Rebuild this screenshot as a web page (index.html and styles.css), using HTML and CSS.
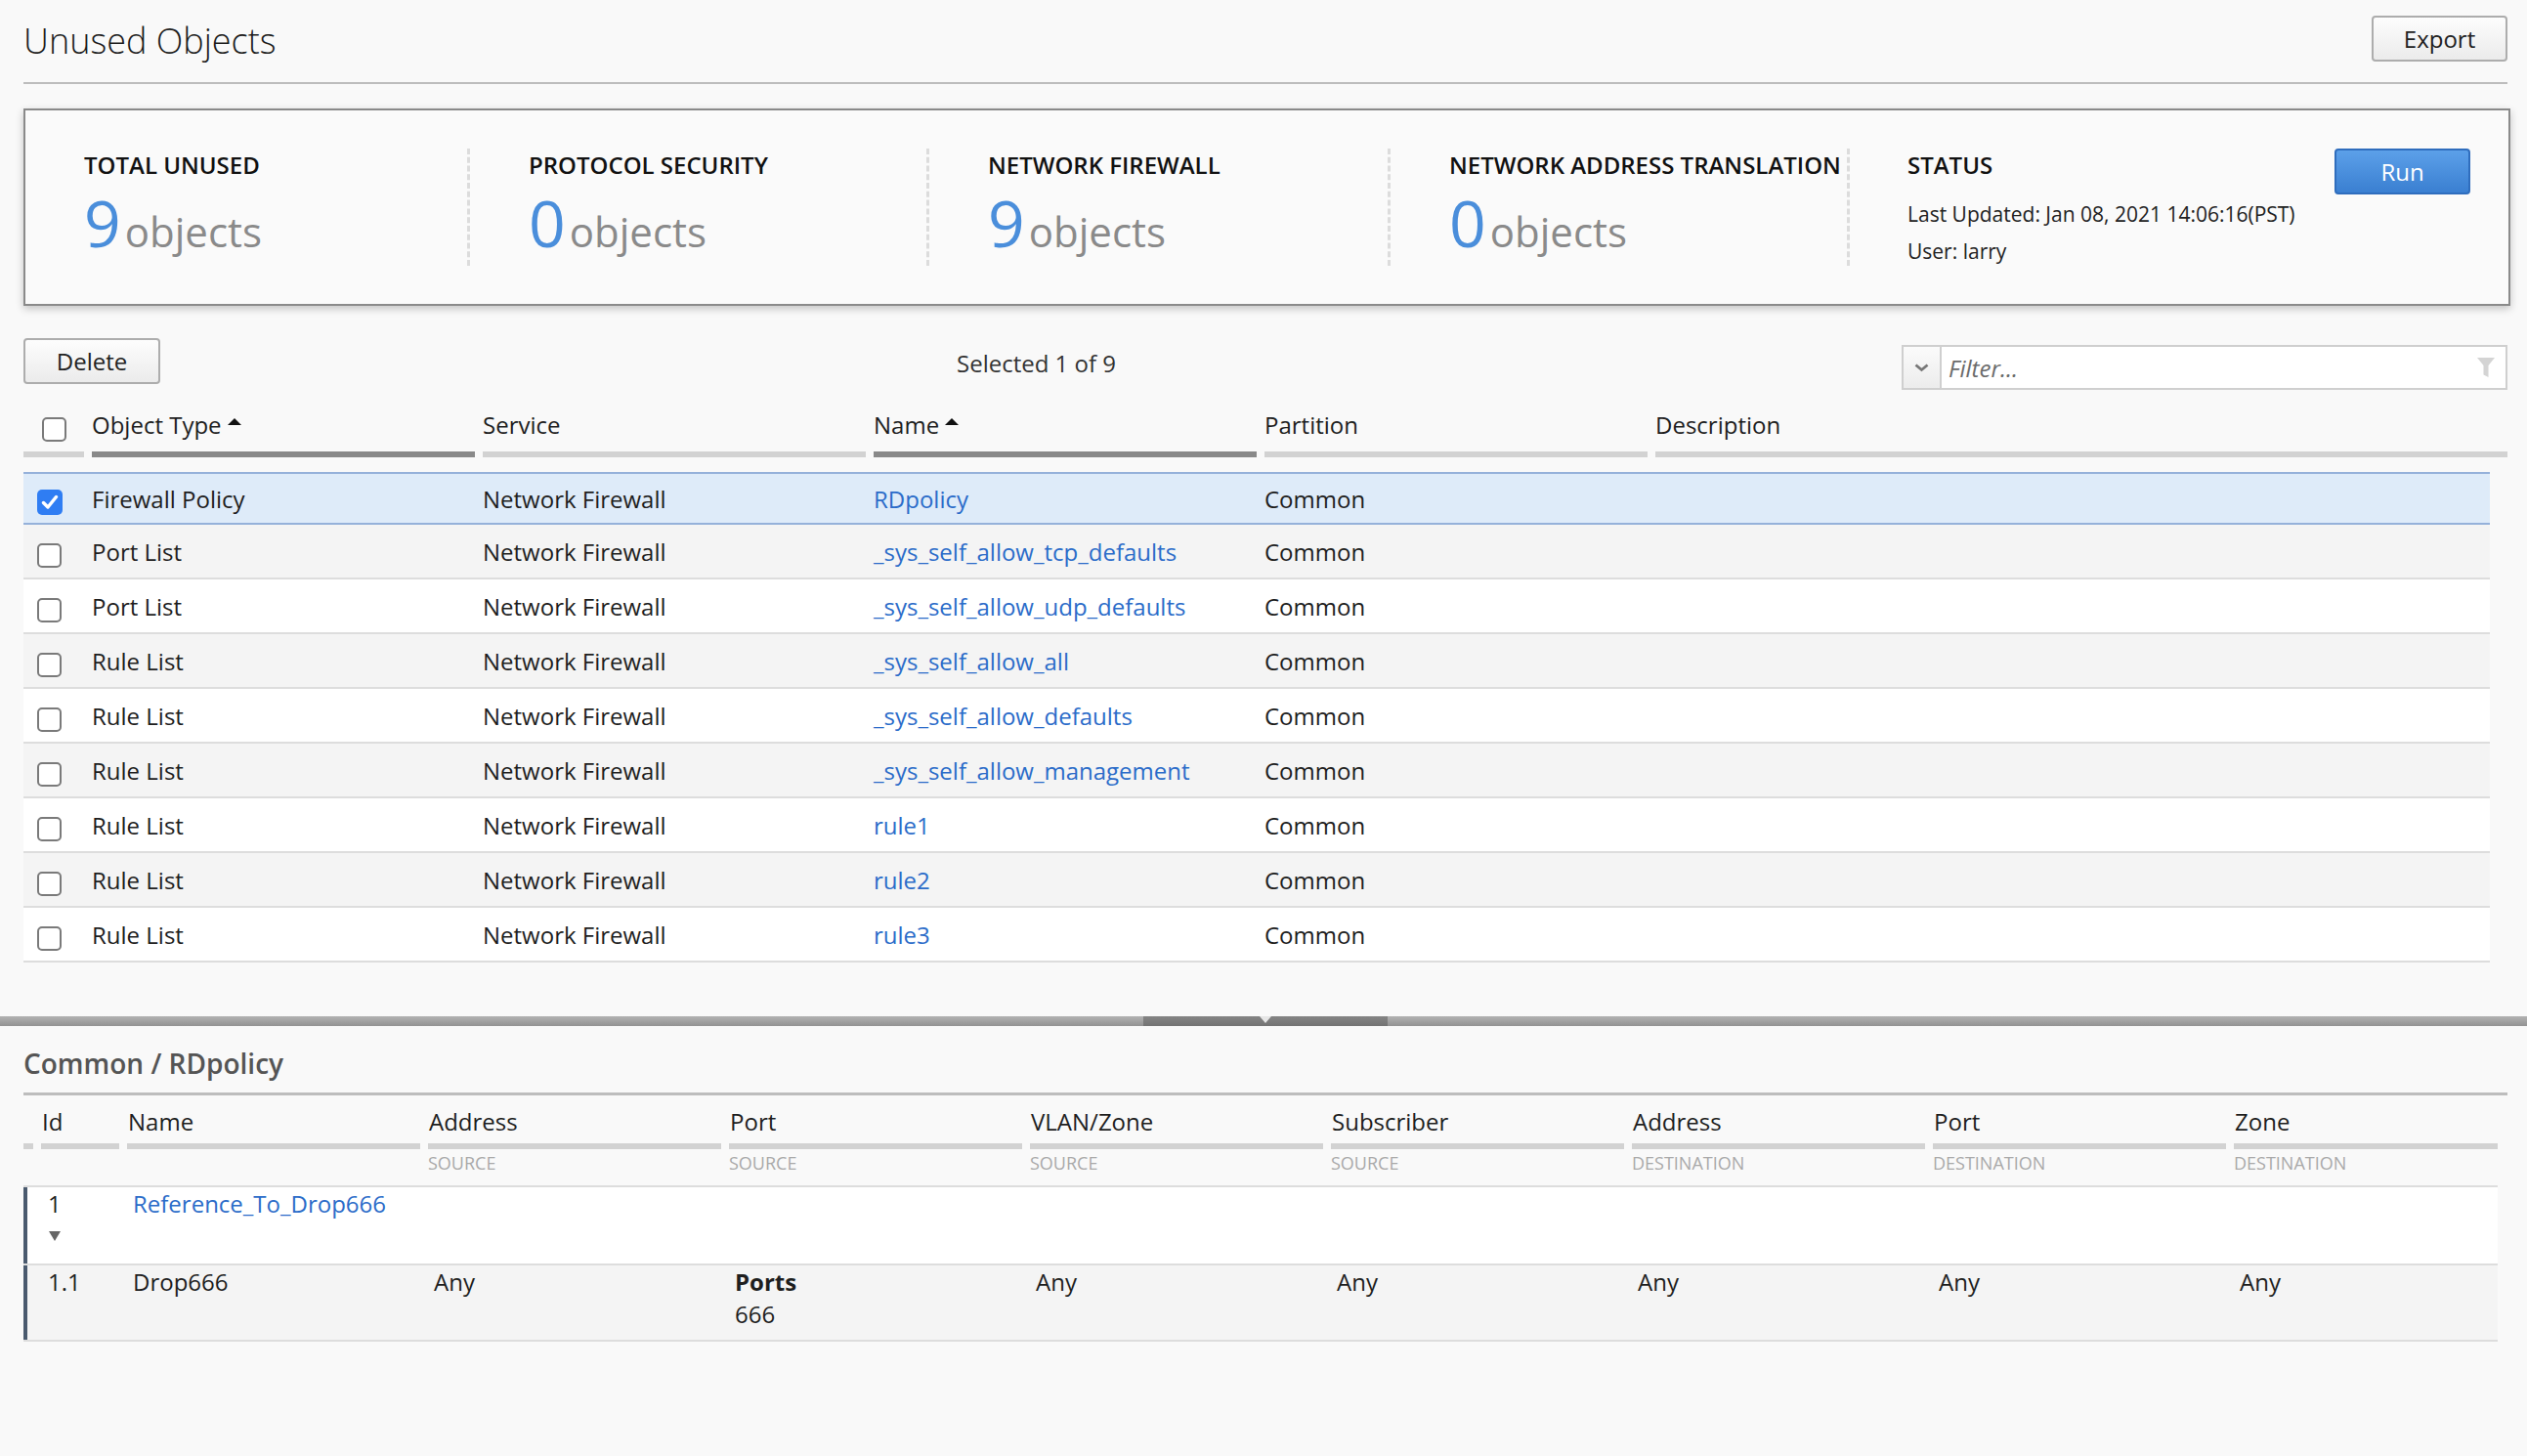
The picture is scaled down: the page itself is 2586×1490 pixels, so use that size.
FILE: index.html
```html
<!DOCTYPE html>
<html lang="en">
<head>
<meta charset="utf-8">
<title>Unused Objects</title>
<link rel="stylesheet" href="styles.css">
</head>
<body>
<div class="main">
  <header class="page-header">
    <h1 class="page-title">Unused Objects</h1>
    <button class="btn btn-export">Export</button>
  </header>

  <section class="summary">
    <div class="stat">
      <div class="stat-label">TOTAL UNUSED</div>
      <div class="stat-value"><span class="num">9</span><span class="unit">objects</span></div>
    </div>
    <div class="stat">
      <div class="stat-label">PROTOCOL SECURITY</div>
      <div class="stat-value"><span class="num">0</span><span class="unit">objects</span></div>
    </div>
    <div class="stat">
      <div class="stat-label">NETWORK FIREWALL</div>
      <div class="stat-value"><span class="num">9</span><span class="unit">objects</span></div>
    </div>
    <div class="stat">
      <div class="stat-label">NETWORK ADDRESS TRANSLATION</div>
      <div class="stat-value"><span class="num">0</span><span class="unit">objects</span></div>
    </div>
    <div class="stat stat-status">
      <div class="status-info">
        <div class="stat-label">STATUS</div>
        <div class="status-line status-first">Last Updated: Jan 08, 2021 14:06:16(PST)</div>
        <div class="status-line">User: larry</div>
      </div>
      <button class="btn btn-primary">Run</button>
    </div>
  </section>

  <div class="toolbar">
    <button class="btn btn-delete">Delete</button>
    <span class="selection">Selected 1 of 9</span>
    <div class="filter">
      <div class="filter-drop">
        <svg width="15" height="9" viewBox="0 0 15 9"><path d="M1.5 1.5 L7.5 6.5 L13.5 1.5" fill="none" stroke="#777" stroke-width="2.8"/></svg>
      </div>
      <div class="filter-text">Filter...</div>
      <svg class="funnel" width="20" height="22" viewBox="0 0 20 22"><path d="M1 1 H19 L12.5 9 V21 L7.5 18.5 V9 Z" fill="#d4d4d4"/></svg>
    </div>
  </div>

  <div class="grid grid-head">
    <div class="th th-check"><span class="cb"></span></div>
    <div class="th sorted">Object Type<span class="sort-up"></span></div>
    <div class="th">Service</div>
    <div class="th sorted">Name<span class="sort-up"></span></div>
    <div class="th">Partition</div>
    <div class="th">Description</div>
  </div>

  <div class="grid-body">
    <div class="grid row selected">
      <div class="td td-check"><span class="cb checked"><svg width="26" height="26" viewBox="0 0 26 26"><path d="M6.5 13.5 L11 18 L19.5 7.5" fill="none" stroke="#fff" stroke-width="3.4" stroke-linecap="round" stroke-linejoin="round"/></svg></span></div>
      <div class="td">Firewall Policy</div>
      <div class="td">Network Firewall</div>
      <div class="td"><a class="link">RDpolicy</a></div>
      <div class="td">Common</div>
      <div class="td"></div>
    </div>
    <div class="grid row alt">
      <div class="td td-check"><span class="cb"></span></div>
      <div class="td">Port List</div>
      <div class="td">Network Firewall</div>
      <div class="td"><a class="link">_sys_self_allow_tcp_defaults</a></div>
      <div class="td">Common</div>
      <div class="td"></div>
    </div>
    <div class="grid row">
      <div class="td td-check"><span class="cb"></span></div>
      <div class="td">Port List</div>
      <div class="td">Network Firewall</div>
      <div class="td"><a class="link">_sys_self_allow_udp_defaults</a></div>
      <div class="td">Common</div>
      <div class="td"></div>
    </div>
    <div class="grid row alt">
      <div class="td td-check"><span class="cb"></span></div>
      <div class="td">Rule List</div>
      <div class="td">Network Firewall</div>
      <div class="td"><a class="link">_sys_self_allow_all</a></div>
      <div class="td">Common</div>
      <div class="td"></div>
    </div>
    <div class="grid row">
      <div class="td td-check"><span class="cb"></span></div>
      <div class="td">Rule List</div>
      <div class="td">Network Firewall</div>
      <div class="td"><a class="link">_sys_self_allow_defaults</a></div>
      <div class="td">Common</div>
      <div class="td"></div>
    </div>
    <div class="grid row alt">
      <div class="td td-check"><span class="cb"></span></div>
      <div class="td">Rule List</div>
      <div class="td">Network Firewall</div>
      <div class="td"><a class="link">_sys_self_allow_management</a></div>
      <div class="td">Common</div>
      <div class="td"></div>
    </div>
    <div class="grid row">
      <div class="td td-check"><span class="cb"></span></div>
      <div class="td">Rule List</div>
      <div class="td">Network Firewall</div>
      <div class="td"><a class="link">rule1</a></div>
      <div class="td">Common</div>
      <div class="td"></div>
    </div>
    <div class="grid row alt">
      <div class="td td-check"><span class="cb"></span></div>
      <div class="td">Rule List</div>
      <div class="td">Network Firewall</div>
      <div class="td"><a class="link">rule2</a></div>
      <div class="td">Common</div>
      <div class="td"></div>
    </div>
    <div class="grid row">
      <div class="td td-check"><span class="cb"></span></div>
      <div class="td">Rule List</div>
      <div class="td">Network Firewall</div>
      <div class="td"><a class="link">rule3</a></div>
      <div class="td">Common</div>
      <div class="td"></div>
    </div>
  </div>
</div>

<div class="splitter"><div class="splitter-handle"><span class="splitter-arrow"></span></div></div>

<div class="detail">
  <h2 class="detail-title">Common / RDpolicy</h2>

  <div class="dgrid dhead">
    <div class="dth"></div>
    <div class="dth">Id</div>
    <div class="dth">Name</div>
    <div class="dth">Address</div>
    <div class="dth">Port</div>
    <div class="dth">VLAN/Zone</div>
    <div class="dth">Subscriber</div>
    <div class="dth">Address</div>
    <div class="dth">Port</div>
    <div class="dth">Zone</div>
  </div>
  <div class="dgrid dsub">
    <div></div><div></div><div></div>
    <div>SOURCE</div>
    <div>SOURCE</div>
    <div>SOURCE</div>
    <div>SOURCE</div>
    <div>DESTINATION</div>
    <div>DESTINATION</div>
    <div>DESTINATION</div>
  </div>

  <div class="drows">
    <div class="dgrid drow drow-parent">
      <div class="dcell"></div>
      <div class="dcell dcell-id">1<span class="expander"></span></div>
      <div class="dcell"><a class="link">Reference_To_Drop666</a></div>
      <div class="dcell"></div><div class="dcell"></div><div class="dcell"></div>
      <div class="dcell"></div><div class="dcell"></div><div class="dcell"></div><div class="dcell"></div>
    </div>
    <div class="dgrid drow drow-child">
      <div class="dcell"></div>
      <div class="dcell dcell-id">1.1</div>
      <div class="dcell">Drop666</div>
      <div class="dcell">Any</div>
      <div class="dcell"><strong class="ports">Ports</strong><br>666</div>
      <div class="dcell">Any</div>
      <div class="dcell">Any</div>
      <div class="dcell">Any</div>
      <div class="dcell">Any</div>
      <div class="dcell">Any</div>
    </div>
  </div>
</div>
</body>
</html>
```

FILE: styles.css
```css
* { box-sizing: border-box; }

html, body {
  margin: 0;
  padding: 0;
  background: #f9f9f9;
}

body {
  font-family: "Open Sans", "Noto Sans", "Liberation Sans", sans-serif;
  font-size: 24px;
  color: #1e1e1e;
  width: 2586px;
  min-height: 1490px;
}

.main {
  padding: 0 20px 0 24px;
}

/* ---------- page header ---------- */
.page-header {
  display: flex;
  justify-content: space-between;
  align-items: flex-start;
  padding-top: 16px;
  height: 86px;
  border-bottom: 2px solid #bdbdbd;
}

.page-title {
  margin: 3px 0 0;
  font-size: 36px;
  font-weight: 300;
  line-height: 46px;
  color: #1c1c1c;
}

.btn {
  font-family: inherit;
  font-size: 24px;
  color: #222;
  height: 47px;
  width: 139px;
  border: 2px solid #adadad;
  border-radius: 4px;
  background: linear-gradient(#fdfdfd, #ebebeb);
  padding: 0;
  line-height: 40px;
}

.btn-delete { width: 140px; }

.btn-primary {
  color: #fff;
  border-color: #2f6dbd;
  background: linear-gradient(#5ca0e9, #3a7fd1);
}

/* ---------- summary box ---------- */
.summary {
  margin-top: 25px;
  margin-right: -3px;
  height: 202px;
  border: 2px solid #8a8a8a;
  background: #fafafa;
  box-shadow: 0 3px 8px rgba(0, 0, 0, 0.22);
  padding: 39px 0;
  display: grid;
  grid-template-columns: 452px 470px 472px 470px 1fr;
}

.stat {
  height: 120px;
  padding-left: 60px;
  border-left: 3px dashed #dcdcdc;
  white-space: nowrap;
}

.stat:first-child { border-left: none; }

.stat-label {
  font-weight: 600;
  font-size: 24px;
  line-height: 34px;
  color: #111;
}

.stat-value {
  margin-top: -4px;
  font-size: 66px;
  line-height: normal;
}

.num {
  color: #4a8edb;
}

.unit {
  font-size: 42px;
  color: #8a8a8a;
  margin-left: 4px;
}

.stat-status {
  display: flex;
  justify-content: space-between;
  align-items: flex-start;
  padding-right: 39px;
  padding-left: 59px;
}

.status-line {
  font-size: 21px;
  line-height: 38px;
  color: #222;
}

.status-first { margin-top: 14px; }

/* ---------- toolbar ---------- */
.toolbar {
  margin-top: 33px;
  height: 53px;
  display: flex;
}

.toolbar .btn-delete { align-self: flex-start; }

.selection {
  align-self: center;
  margin-left: 815px;
  margin-top: -2px;
  color: #333;
}

.filter {
  align-self: flex-end;
  margin-left: auto;
  width: 620px;
  height: 46px;
  border: 2px solid #cfcfcf;
  background: #fff;
  display: flex;
  align-items: center;
}

.filter-drop {
  width: 39px;
  height: 100%;
  border-right: 2px solid #cfcfcf;
  background: linear-gradient(#fbfbfb, #ececec);
  display: flex;
  align-items: center;
  justify-content: center;
}

.filter-text {
  flex: 1;
  padding-left: 7px;
  font-style: italic;
  color: #6b6b6b;
}

.funnel { margin-right: 10px; }

/* ---------- main grid ---------- */
.grid {
  display: grid;
  grid-template-columns: 62px 392px 392px 392px 392px 1fr;
  column-gap: 8px;
}

.grid-head { padding-top: 19px; }

.th {
  line-height: 33px;
  padding-bottom: 11px;
  border-bottom: 6px solid #d2d2d2;
  white-space: nowrap;
}

.th.sorted { border-bottom-color: #898989; }

.th-check {
  display: flex;
  align-items: flex-start;
  padding-left: 19px;
  height: 50px;
}

.th-check .cb { margin-top: 9px; }

.sort-up {
  display: inline-block;
  vertical-align: top;
  margin-top: 10px;
  margin-left: 6px;
  width: 0;
  height: 0;
  border-left: 7px solid transparent;
  border-right: 7px solid transparent;
  border-bottom: 7px solid #111;
}

.grid-body {
  margin-top: 15px;
  margin-right: 18px;
}

.row {
  height: 56px;
  align-items: center;
  background: #fff;
  border-bottom: 2px solid #dddddd;
}

.row.alt { background: #f4f4f4; }

.row.selected {
  height: 54px;
  background: #deebf9;
  border-top: 2px solid #95b1da;
  border-bottom: 2px solid #95b1da;
}

.td { white-space: nowrap; }

.td-check {
  padding-left: 14px;
  display: flex;
}

.td-check .cb { margin-top: 8px; }

.cb {
  display: inline-block;
  width: 25px;
  height: 25px;
  border: 2px solid #7a7a7a;
  border-radius: 5px;
  background: #fff;
}

.cb.checked {
  width: 26px;
  height: 26px;
  border: none;
  background: #2f7df3;
}

.cb.checked svg { display: block; }

.link {
  color: #2b6cc9;
  text-decoration: none;
}

/* ---------- splitter ---------- */
.splitter {
  margin-top: 55px;
  height: 10px;
  background: linear-gradient(#b2b2b2, #939393);
  display: flex;
  justify-content: center;
}

.splitter-handle {
  margin-left: 4px;
  width: 250px;
  height: 10px;
  background: linear-gradient(#858585, #737373);
  display: flex;
  justify-content: center;
}

.splitter-arrow {
  width: 0;
  height: 0;
  border-left: 6px solid transparent;
  border-right: 6px solid transparent;
  border-top: 7px solid #e6e6e6;
}

/* ---------- detail ---------- */
.detail {
  padding: 19px 20px 0 24px;
}

.detail-title {
  margin: 0;
  font-size: 28px;
  font-weight: 600;
  line-height: 38px;
  color: #555;
  padding-bottom: 11px;
  border-bottom: 3px solid #bdbdbd;
}

.dgrid {
  display: grid;
  grid-template-columns: 10px 80px repeat(7, 300px) 270px;
  column-gap: 8px;
}

.dhead { padding-top: 10px; }

.dth {
  line-height: 33px;
  padding-bottom: 6px;
  padding-left: 1px;
  border-bottom: 6px solid #d2d2d2;
  white-space: nowrap;
}

.dsub {
  font-size: 18px;
  line-height: 24px;
  color: #a9a9a9;
  padding-top: 2px;
  padding-bottom: 11px;
}

.drows {
  width: 2532px;
  border-top: 2px solid #dddddd;
}

.drow {
  box-shadow: inset 4px 0 0 #4a5a6e;
  border-bottom: 2px solid #dddddd;
}

.drow-parent {
  height: 80px;
  background: #fff;
}

.drow-child {
  height: 78px;
  background: #f4f4f4;
}

.dcell {
  padding-top: 0;
  padding-left: 6px;
  line-height: 33px;
  white-space: nowrap;
}

.dcell-id { padding-left: 7px; }

.expander {
  display: block;
  width: 0;
  height: 0;
  margin-top: 12px;
  margin-left: 1px;
  border-left: 6px solid transparent;
  border-right: 6px solid transparent;
  border-top: 10px solid #666;
}

.ports { font-weight: 700; }
```
